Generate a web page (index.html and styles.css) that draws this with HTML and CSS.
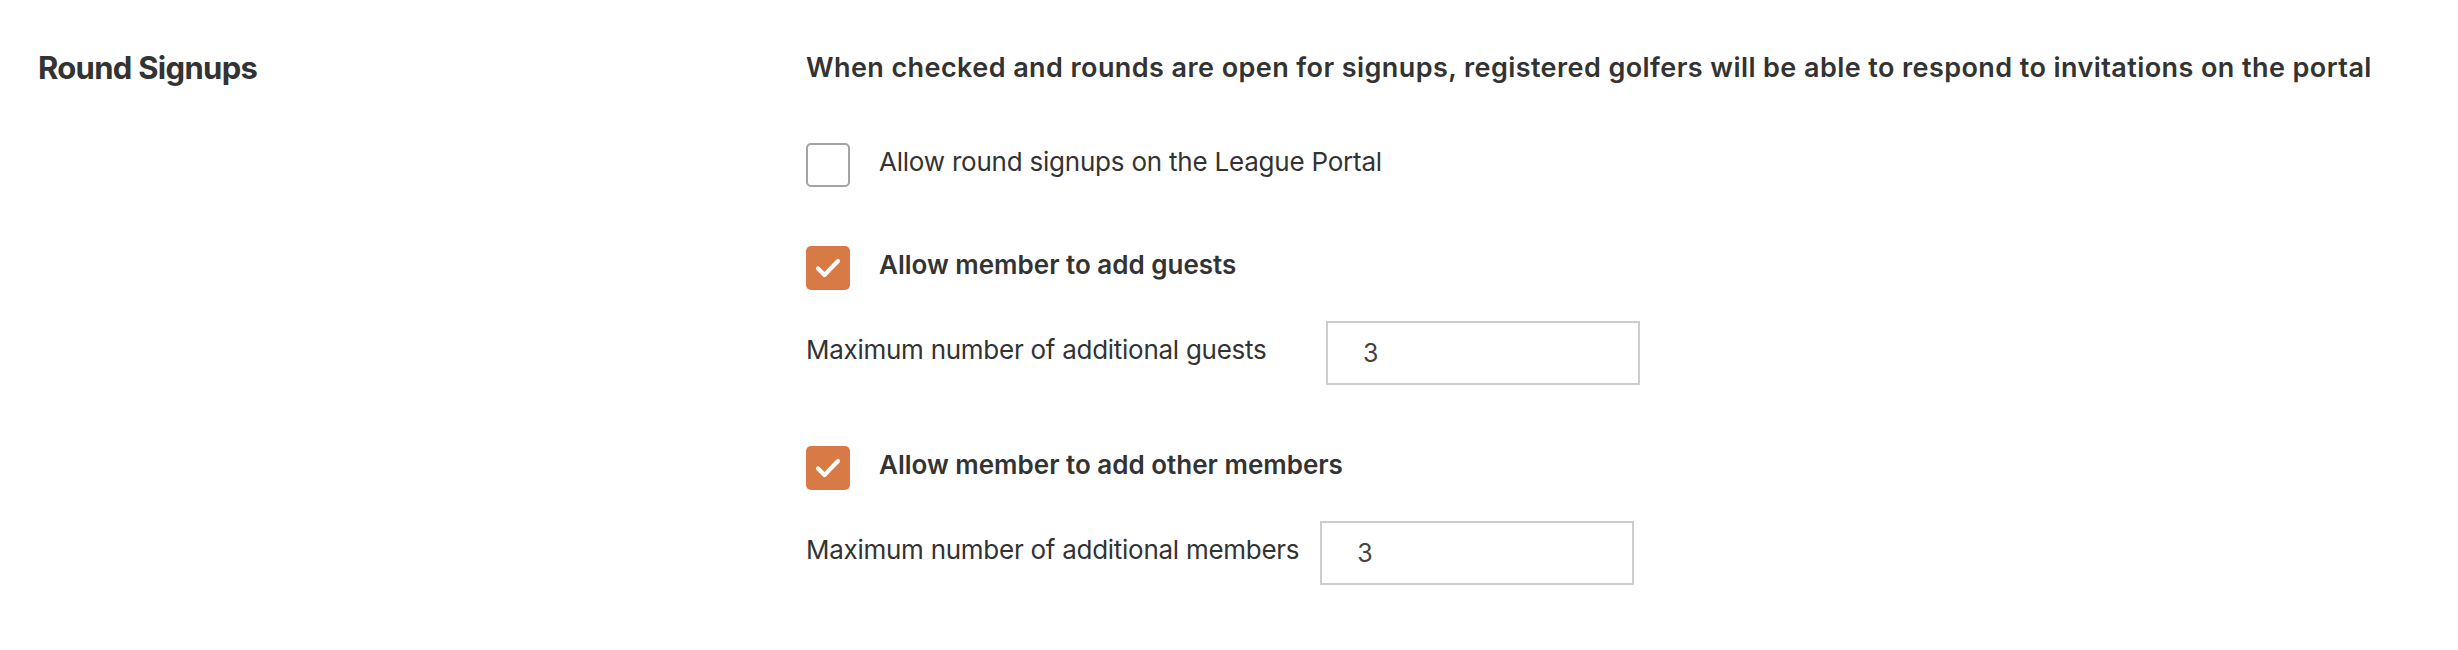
FILE: index.html
```html
<!DOCTYPE html>
<html lang="en">
<head>
<meta charset="utf-8">
<title>Round Signups</title>
<link rel="stylesheet" href="styles.css">
</head>
<body>
<section class="setting">
  <h2 class="setting-title">Round Signups</h2>
  <div class="setting-body">
    <p class="lead">When checked and rounds are open for signups, registered golfers will be able to respond to invitations on the portal</p>

    <label class="check-row gap-lg">
      <span class="box"></span>
      <span class="check-text">Allow round signups on the League Portal</span>
    </label>

    <label class="check-row gap-sm">
      <span class="box checked">
        <svg viewBox="0 0 44 44" width="44" height="44"><path d="M12 22.5 L18.5 29 L32 15" fill="none" stroke="#fff" stroke-width="4.2" stroke-linecap="round" stroke-linejoin="round"/></svg>
      </span>
      <span class="check-text strong">Allow member to add guests</span>
    </label>

    <div class="field-row gap-lg">
      <span class="field-label wide">Maximum number of additional guests</span>
      <div class="num-input">3</div>
    </div>

    <label class="check-row gap-sm">
      <span class="box checked">
        <svg viewBox="0 0 44 44" width="44" height="44"><path d="M12 22.5 L18.5 29 L32 15" fill="none" stroke="#fff" stroke-width="4.2" stroke-linecap="round" stroke-linejoin="round"/></svg>
      </span>
      <span class="check-text strong">Allow member to add other members</span>
    </label>

    <div class="field-row">
      <span class="field-label">Maximum number of additional members</span>
      <div class="num-input">3</div>
    </div>
  </div>
</section>
</body>
</html>
```

FILE: styles.css
```css
html, body {
  margin: 0;
  padding: 0;
  background: #ffffff;
}

body {
  font-family: Inter, "Open Sans", "Liberation Sans", sans-serif;
  color: #333333;
}

.setting {
  display: flex;
  align-items: flex-start;
  padding: 49px 0 0 38px;
}

.setting-title {
  width: 768px;
  flex: none;
  margin: 0;
  font-size: 31px;
  line-height: 38px;
  font-weight: 700;
  letter-spacing: -0.7px;
  color: #333333;
}

.setting-body {
  display: flex;
  flex-direction: column;
  align-items: flex-start;
}

.lead {
  margin: 0 0 56px 0;
  font-size: 27px;
  line-height: 38px;
  font-weight: 600;
  letter-spacing: 0.42px;
  color: #333333;
}

.check-row {
  display: flex;
  align-items: center;
  height: 44px;
  gap: 29px;
}

.gap-lg { margin-bottom: 59px; }
.check-row.gap-sm { margin-bottom: 31px; }
.field-row.gap-lg { margin-bottom: 61px; }

.box {
  width: 44px;
  height: 44px;
  box-sizing: border-box;
  border: 2px solid #a3a3a3;
  border-radius: 5px;
  background: #ffffff;
  flex: none;
  display: block;
}

.box.checked {
  border: none;
  background: #d87a45;
}

.box svg { display: block; }

.check-text {
  font-size: 26px;
  line-height: 32px;
  font-weight: 400;
  letter-spacing: -0.22px;
  margin-bottom: 6px;
}

.check-text.strong {
  font-weight: 600;
  letter-spacing: 0;
}

.field-row {
  display: flex;
  align-items: center;
  gap: 21px;
}

.field-label {
  font-size: 26px;
  line-height: 32px;
  font-weight: 400;
  letter-spacing: -0.27px;
  margin-bottom: 6px;
}

.field-label.wide {
  width: 499px;
}

.num-input {
  width: 314px;
  height: 64px;
  box-sizing: border-box;
  border: 2px solid #cdcdcd;
  padding-left: 35px;
  display: flex;
  align-items: center;
  font-size: 25px;
  color: #444444;
}
```
